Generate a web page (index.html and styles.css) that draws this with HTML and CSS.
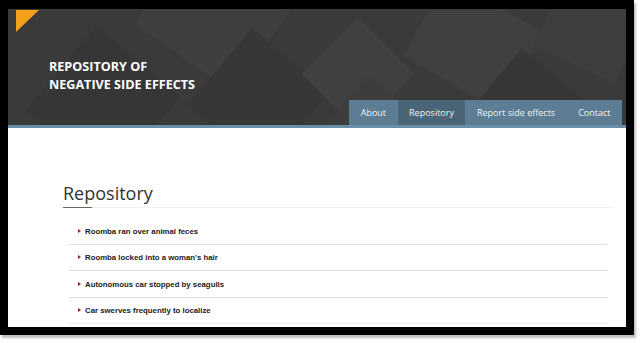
FILE: index.html
```html
<!DOCTYPE html>
<html lang="en">
<head>
<meta charset="utf-8">
<title>Repository of Negative Side Effects</title>
<link rel="stylesheet" href="styles.css">
</head>
<body>
<div class="frame">
  <div class="page">
    <header class="site-header">
      <svg class="bg-shapes" width="618" height="116" viewBox="0 0 618 116" aria-hidden="true">
        <rect x="150" y="-60" width="120" height="120" fill="#3f3f3f" transform="rotate(35 210 0)"/>
        <rect x="40" y="40" width="110" height="110" fill="#363636" transform="rotate(40 95 95)"/>
        <rect x="200" y="40" width="100" height="100" fill="#373737" transform="rotate(40 250 90)"/>
        <rect x="310" y="25" width="80" height="80" fill="#404040" transform="rotate(45 350 65)"/>
        <rect x="410" y="-10" width="110" height="90" fill="#404040" transform="rotate(30 465 35)"/>
        <rect x="540" y="-30" width="90" height="90" fill="#3e3e3e" transform="rotate(25 585 15)"/>
        <rect x="470" y="60" width="100" height="100" fill="#363636" transform="rotate(40 520 110)"/>
        <rect x="330" y="80" width="70" height="70" fill="#3d3d3d" transform="rotate(40 365 115)"/>
      </svg>
      <span class="corner"></span>
      <h1 class="site-title">REPOSITORY OF<br>NEGATIVE SIDE EFFECTS</h1>
      <nav class="main-nav">
        <a class="nav-item" href="#">About</a>
        <a class="nav-item active" href="#">Repository</a>
        <a class="nav-item" href="#">Report side effects</a>
        <a class="nav-item" href="#">Contact</a>
      </nav>
    </header>
    <main class="content">
      <h2 class="section-title">Repository</h2>
      <ul class="entries">
        <li class="entry">Roomba ran over animal feces</li>
        <li class="entry">Roomba locked into a woman's hair</li>
        <li class="entry">Autonomous car stopped by seagulls</li>
        <li class="entry">Car swerves frequently to localize</li>
      </ul>
    </main>
  </div>
</div>
</body>
</html>
```

FILE: styles.css
```css
* { box-sizing: border-box; }
html, body { margin: 0; padding: 0; }
body {
  background: #ffffff;
  width: 640px;
  height: 343px;
  overflow: hidden;
  font-family: "Open Sans", "Liberation Sans", sans-serif;
}
.frame {
  width: 634px;
  height: 335px;
  background: #000;
  padding: 9px 8px 8px 8px;
  box-shadow: 2px 3px 2px rgba(0, 0, 0, 0.25);
}
.page {
  width: 618px;
  height: 318px;
  background: #fff;
  overflow: hidden;
  display: flex;
  flex-direction: column;
}
.site-header {
  position: relative;
  height: 119px;
  flex: none;
  background: #3a3a3a;
  border-bottom: 3px solid #6a8ea8;
  display: flex;
  flex-direction: column;
  overflow: hidden;
}
.bg-shapes {
  position: absolute;
  left: 0;
  top: 0;
}
.corner {
  position: absolute;
  left: 8px;
  top: 1px;
  width: 0;
  height: 0;
  border-top: 22px solid #f5a01a;
  border-right: 23px solid transparent;
}
.site-title {
  position: relative;
  margin: 49px 0 0 41px;
  font-size: 12.6px;
  line-height: 18px;
  font-weight: 700;
  color: #ffffff;
  letter-spacing: 0;
}
.main-nav {
  position: relative;
  margin-top: auto;
  align-self: flex-end;
  margin-right: 4px;
  display: flex;
  height: 25px;
}
.nav-item {
  display: flex;
  align-items: center;
  padding: 0 11.5px;
  background: #5c7d94;
  color: #eef3f6;
  font-size: 9px;
  font-weight: 500;
  text-decoration: none;
}
.nav-item.active {
  background: #4a6577;
}
.content {
  padding: 53px 13px 0 55px;
  flex: 1;
}
.section-title {
  position: relative;
  margin: 0;
  font-size: 18px;
  line-height: 24px;
  font-weight: 400;
  color: #333;
  padding-bottom: 2px;
  border-bottom: 1px solid #f0f0f0;
}
.section-title::after {
  content: "";
  position: absolute;
  left: 0;
  bottom: -1px;
  width: 29px;
  height: 1px;
  background: #666;
}
.entries {
  list-style: none;
  margin: 10px 6px 0 6px;
  padding: 0;
}
.entry {
  height: 26.5px;
  display: flex;
  align-items: center;
  padding-left: 16px;
  position: relative;
  border-bottom: 1px solid #dcdcdc;
  font-family: "Liberation Sans", Arial, sans-serif;
  font-size: 7.8px;
  font-weight: 700;
  color: #1a1a1a;
  padding-top: 1px;
}
.entry:last-child { border-bottom-color: #eeeeee; }
.entry::before {
  content: "";
  position: absolute;
  left: 9px;
  top: 50%;
  margin-top: -2px;
  border-left: 3px solid #8a2b1c;
  border-top: 2.5px solid transparent;
  border-bottom: 2.5px solid transparent;
}
```
